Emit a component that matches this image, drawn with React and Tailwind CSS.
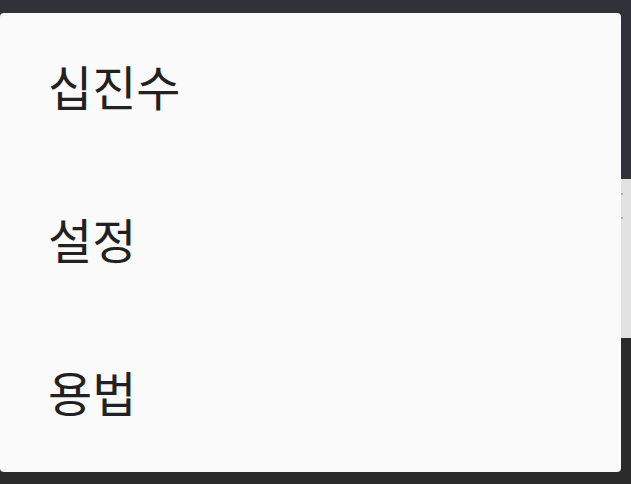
export default function App() {
  const items = ["십진수", "설정", "용법"];
  return (
    <div
      className="relative w-[631px] h-[484px] overflow-hidden"
      style={{ fontFamily: '"Noto Sans CJK KR", Roboto, sans-serif' }}
    >
      <div className="flex flex-col h-full">
        <div className="h-[179px] bg-[#30323a]" />
        <div className="h-[159px] bg-[#e1e1e1] flex flex-col items-end pt-[14px] gap-[22px] pr-[8px]">
          <div className="w-[2px] h-[2px] bg-[#8fb8bd]" />
          <div className="w-[2px] h-[2px] bg-[#8fb8bd]" />
        </div>
        <div className="flex-1 bg-[#2b2b2b]" />
      </div>
      <div className="absolute left-0 top-[13px] w-[621px] h-[459px] bg-[#fafafa] rounded-[4px] flex flex-col">
        {items.map((t) => (
          <div
            key={t}
            className="h-[153px] flex items-center pl-[48px] pb-[10px] text-[48px] text-[#212121] leading-none"
          >
            {t}
          </div>
        ))}
      </div>
    </div>
  );
}
